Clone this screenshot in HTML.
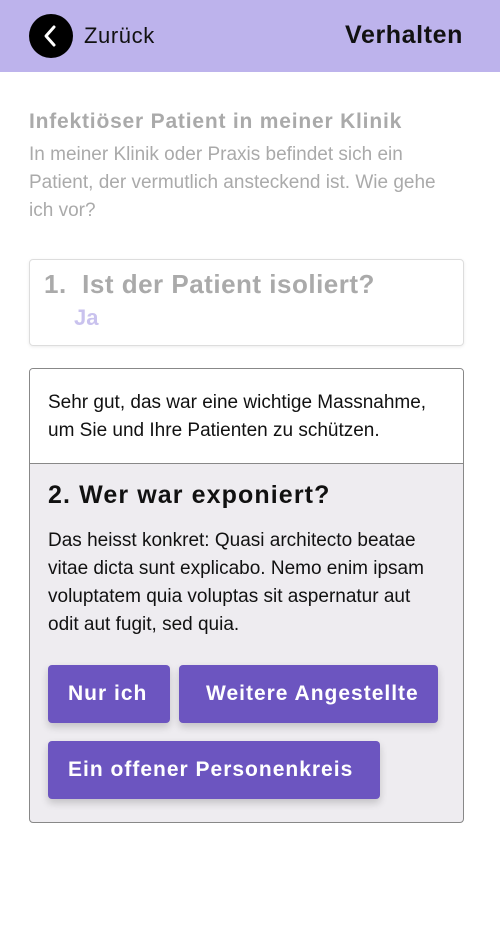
<!DOCTYPE html>
<html><head><meta charset="utf-8"><style>
*{margin:0;padding:0;box-sizing:border-box}
body{width:500px;height:925px;background:#fff;font-family:"Liberation Sans",sans-serif;position:relative;overflow:hidden}
.hdr{position:absolute;left:0;top:0;width:500px;height:72px;background:#bdb3ec}
.circ{position:absolute;left:29px;top:14px;width:44px;height:44px;border-radius:50%;background:#000}
.abs{position:absolute;white-space:nowrap}
.b1{position:absolute;left:29px;top:259px;width:435px;height:87px;border:1px solid #ddd;border-radius:4px;box-shadow:0 1px 3px rgba(0,0,0,.08)}
.b2{position:absolute;left:29px;top:368px;width:435px;height:455px;border:1px solid #888;border-radius:4px;overflow:hidden;background:#eeecf0}
.top{position:absolute;left:0;top:0;width:100%;height:95px;background:#fff;border-bottom:1px solid #888}
.btn{position:absolute;background:#6c55c0;color:#fff;border-radius:4px;font-size:21px;font-weight:bold;letter-spacing:1px;box-shadow:0 4px 8px rgba(0,0,0,.18);line-height:58px;padding-left:20px;white-space:nowrap}
</style></head><body>
<div class="hdr">
<div class="circ"><svg width="44" height="44" viewBox="0 0 44 44"><path d="M25 13 L17 22 L25 31" stroke="#fff" stroke-width="3" fill="none" stroke-linecap="round" stroke-linejoin="round"/></svg></div>
<div class="abs" style="left:84px;top:23px;font-size:22px;letter-spacing:0.6px;color:#111">Zurück</div>
<div class="abs" style="right:37px;top:21px;font-size:25px;letter-spacing:0.6px;font-weight:bold;color:#111">Verhalten</div>
</div>
<div class="abs" style="left:29px;top:110px;font-size:21px;letter-spacing:0.8px;font-weight:bold;color:#aaa">Infektiöser Patient in meiner Klinik</div>
<div class="abs" style="left:29px;top:141px;font-size:19px;line-height:28px;color:#aaa;white-space:normal;width:415px">In meiner Klinik oder Praxis befindet sich ein Patient, der vermutlich ansteckend ist. Wie gehe ich vor?</div>
<div class="b1">
<div class="abs" style="left:14px;top:9px;font-size:26px;letter-spacing:0.5px;font-weight:bold;color:#aaa">1.&nbsp; Ist der Patient isoliert?</div>
<div class="abs" style="left:44px;top:45px;font-size:22px;font-weight:bold;color:#c9c2ee">Ja</div>
</div>
<div class="b2">
<div class="top"><div class="abs" style="left:18px;top:20px;font-size:19px;line-height:28px;color:#111;white-space:normal;width:400px">Sehr gut, das war eine wichtige Massnahme, um Sie und Ihre Patienten zu schützen.</div></div>
<div class="abs" style="left:18px;top:112px;font-size:25px;letter-spacing:1.1px;font-weight:bold;color:#111">2. Wer war exponiert?</div>
<div class="abs" style="left:18px;top:158px;font-size:19px;line-height:28px;color:#111;white-space:normal;width:385px">Das heisst konkret: Quasi architecto beatae vitae dicta sunt explicabo. Nemo enim ipsam voluptatem quia voluptas sit aspernatur aut odit aut fugit, sed quia.</div>
<div class="btn" style="left:18px;top:296px;width:122px">Nur ich</div>
<div class="btn" style="left:149px;top:296px;width:259px;padding-left:27px">Weitere Angestellte</div>
<div class="btn" style="left:18px;top:372px;width:332px">Ein offener Personenkreis</div>
</div>
</body></html>
